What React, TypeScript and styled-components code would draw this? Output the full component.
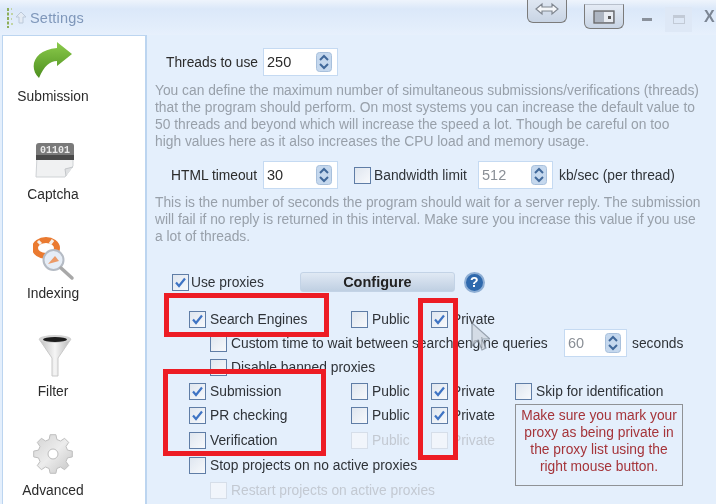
import styled, { createGlobalStyle } from 'styled-components'

const GlobalStyle = createGlobalStyle`
  html, body {
    margin: 0;
    padding: 0;
    background: #e4effc;
    overflow: hidden;
  }
`

const App = () => {
  return (
    <Window>
      <GlobalStyle />
      <TitleBar>
        <AppIcon />
        <Title>Settings</Title>
        <ToolButton $top={-6} $height={29} $left={527}>
          <svg width="24" height="14" viewBox="0 0 24 14">
            <path d="M1 7 L7 2 V5 H17 V2 L23 7 L17 12 V9 H7 V12 Z" fill="#f4f6f9" stroke="#808790" strokeWidth="1.2" />
          </svg>
        </ToolButton>
        <ToolButton $top={4} $height={25} $left={584}>
          <svg width="22" height="14" viewBox="0 0 22 14">
            <rect x="1" y="1" width="20" height="12" fill="#aeb6c2" stroke="#666" strokeWidth="1.3" />
            <rect x="11" y="2" width="9" height="10" fill="#e8ecf2" />
            <rect x="15" y="6" width="3" height="3" fill="#555" />
          </svg>
        </ToolButton>
        <WindowControls />
      </TitleBar>
      <Body>
        <Sidebar>
          <NavItem>
            <ArrowIcon />
            <NavLabel>Submission</NavLabel>
          </NavItem>
          <NavItem>
            <CaptchaIcon />
            <NavLabel>Captcha</NavLabel>
          </NavItem>
          <NavItem>
            <IndexingIcon />
            <NavLabel>Indexing</NavLabel>
          </NavItem>
          <NavItem>
            <FilterIcon />
            <NavLabel>Filter</NavLabel>
          </NavItem>
          <NavItem>
            <GearIcon />
            <NavLabel>Advanced</NavLabel>
          </NavItem>
        </Sidebar>
        <Main>
          <FieldRow>
            <FieldLabel $width={111} $indent={19}>Threads to use</FieldLabel>
            <Spin value="250" />
          </FieldRow>
          <Description $top={6}>
            You can define the maximum number of simultaneous submissions/verifications (threads)<br />
            that the program should perform. On most systems you can increase the default value to<br />
            50 threads and beyond which will increase the speed a lot. Though be careful on too<br />
            high values here as it also increases the CPU load and memory usage.
          </Description>
          <FieldRow $top={11}>
            <FieldLabel $width={111} $indent={24}>HTML timeout</FieldLabel>
            <Spin value="30" />
            <Check $left={16} />
            <BandwidthLabel>Bandwidth limit</BandwidthLabel>
            <Spin value="512" $left={9} $muted />
            <Text $left={6}>kb/sec (per thread)</Text>
          </FieldRow>
          <Description $top={5}>
            This is the number of seconds the program should wait for a server reply. The submission<br />
            will fail if no reply is returned in this interval. Make sure you increase this value if you use<br />
            a lot of threads.
          </Description>
          <ProxyHeader>
            <Check checked />
            <Text $left={2}>Use proxies</Text>
            <ConfigureButton>Configure</ConfigureButton>
            <HelpBadge>?</HelpBadge>
          </ProxyHeader>
          <OptionRow $height={24}>
            <NameCell>
              <Check checked />
              <Text $left={4}>Search Engines</Text>
            </NameCell>
            <PublicCell>
              <Check />
              <Text $left={4}>Public</Text>
            </PublicCell>
            <PrivateCell>
              <Check checked />
              <Text $left={4}>Private</Text>
            </PrivateCell>
          </OptionRow>
          <SubOptionRow $height={24}>
            <Check />
            <CustomWaitLabel>Custom time to wait between search engine queries</CustomWaitLabel>
            <Spin value="60" $width={63} $muted />
            <Text $left={5}>seconds</Text>
          </SubOptionRow>
          <SubOptionRow $height={24}>
            <Check />
            <Text $left={4}>Disable banned proxies</Text>
          </SubOptionRow>
          <OptionRow $height={24}>
            <NameCell>
              <Check checked />
              <Text $left={4}>Submission</Text>
            </NameCell>
            <PublicCell>
              <Check />
              <Text $left={4}>Public</Text>
            </PublicCell>
            <PrivateCell>
              <Check checked />
              <Text $left={4}>Private</Text>
            </PrivateCell>
            <Check />
            <Text $left={4}>Skip for identification</Text>
          </OptionRow>
          <OptionRow>
            <NameCell>
              <Check checked />
              <Text $left={4}>PR checking</Text>
            </NameCell>
            <PublicCell>
              <Check />
              <Text $left={4}>Public</Text>
            </PublicCell>
            <PrivateCell>
              <Check checked />
              <Text $left={4}>Private</Text>
            </PrivateCell>
          </OptionRow>
          <OptionRow>
            <NameCell>
              <Check />
              <Text $left={4}>Verification</Text>
            </NameCell>
            <PublicCell>
              <Check disabled />
              <Text $left={4} $disabled>Public</Text>
            </PublicCell>
            <PrivateCell>
              <Check disabled />
              <Text $left={4} $disabled>Private</Text>
            </PrivateCell>
          </OptionRow>
          <OptionRow>
            <NameCell>
              <Check />
              <Text $left={4}>Stop projects on no active proxies</Text>
            </NameCell>
          </OptionRow>
          <SubOptionRow>
            <Check disabled />
            <Text $left={4} $disabled>Restart projects on active proxies</Text>
          </SubOptionRow>

          <NoteBox>
            Make sure you mark your<br />
            proxy as being private in<br />
            the proxy list using the<br />
            right mouse button.
          </NoteBox>
          <RedBox $left={17} $top={258} $width={165} $height={44} />
          <RedBox $left={16} $top={334} $width={163} $height={87} />
          <RedBox $left={271} $top={263} $width={40} $height={162} />
          <Cursor viewBox="0 0 20 30">
            <path d="M2 1 V24 L8 18 L12 28 L16 26 L12 17 H20 Z" fill="#cfd6df" stroke="#7d8794" strokeWidth="1.2" />
          </Cursor>
        </Main>
      </Body>
    </Window>
  )
}

export default App

const Check = ({ checked, disabled, $left }: { checked?: boolean; disabled?: boolean; $left?: number }) => (
  <CheckBox $disabled={disabled} $left={$left}>
    {checked && (
      <svg width="13" height="13" viewBox="0 0 13 13">
        <path d="M2 6.5 L5 10 L11 2.5" fill="none" stroke="#3f74c4" strokeWidth="2.2" />
      </svg>
    )}
  </CheckBox>
)

const Spin = ({ value, $width, $left, $muted }: { value: string; $width?: number; $left?: number; $muted?: boolean }) => (
  <SpinBox $width={$width} $left={$left}>
    <SpinValue $muted={$muted}>{value}</SpinValue>
    <SpinArrows viewBox="0 0 16 20">
      <rect x="0.5" y="0.5" width="15" height="19" rx="3" fill="#c5d8ee" stroke="#a8c0dc" />
      <path d="M4 8 L8 4 L12 8" fill="none" stroke="#40689a" strokeWidth="2" />
      <path d="M4 12 L8 16 L12 12" fill="none" stroke="#40689a" strokeWidth="2" />
    </SpinArrows>
  </SpinBox>
)

const AppIcon = () => (
  <svg width="20" height="22" viewBox="0 0 20 22">
    <path d="M2 1 V21" stroke="#8dae58" strokeWidth="2" strokeDasharray="3 1.5" />
    <path d="M5 2 H6 M5 7 H7 M5 12 H6 M5 17 H7" stroke="#b6cb88" strokeWidth="1.4" />
    <path d="M15 5 L20 10 H17 V16 H13 V10 H10 Z" fill="#e4ebf4" stroke="#bcc9da" />
  </svg>
)

const WindowControls = () => (
  <>
    <MinimizeGlyph />
    <MaximizeBox>
      <MaximizeGlyph />
    </MaximizeBox>
    <CloseGlyph>X</CloseGlyph>
  </>
)

const ArrowIcon = () => (
  <IconSvg width="42" height="40" viewBox="0 0 42 40" $left={29} $top={5}>
    <defs>
      <linearGradient id="arrowFill" x1="0" y1="0" x2="0" y2="1">
        <stop offset="0" stopColor="#8ccb4c" />
        <stop offset="1" stopColor="#4d8f1f" />
      </linearGradient>
    </defs>
    <path d="M25 1 L40 13 L25 25 V20 C18 20 12 25 7 37 C-4 26 2 9 25 7 Z" fill="url(#arrowFill)" />
  </IconSvg>
)

const CaptchaIcon = () => (
  <IconSvg width="40" height="38" viewBox="0 0 40 38" $left={32} $top={8}>
    <path d="M2 14 H38 V24 L30 35 H1 Z" fill="#f0f1f2" stroke="#cfd2d5" />
    <path d="M31 34 L30 27 L38 25" fill="#dfe1e3" stroke="#c3c6c9" />
    <rect x="1" y="1" width="38" height="17" rx="3" fill="#7a7a7a" />
    <rect x="1" y="13" width="38" height="5" fill="#4a4a4a" />
    <text x="20" y="11" textAnchor="middle" fontFamily="Liberation Mono, monospace" fontSize="10" fontWeight="700" fill="#eaeaea">01101</text>
  </IconSvg>
)

const IndexingIcon = () => (
  <IconSvg width="44" height="44" viewBox="0 0 44 44" $left={30} $top={4}>
    <ellipse cx="13" cy="11" rx="11" ry="8" fill="none" stroke="#ea7a30" strokeWidth="6" />
    <path d="M5 4 L8 7 M20 3 L17 7" stroke="#f4f1ec" strokeWidth="3" />
    <circle cx="20.5" cy="23" r="10" fill="#e6edf6" stroke="#b5bbc4" strokeWidth="2" />
    <path d="M15 27 L22 19 L26 24 Z" fill="#eb9a68" />
    <path d="M28 31 L39 41" stroke="#a8a8a8" strokeWidth="3.5" strokeLinecap="round" />
  </IconSvg>
)

const FilterIcon = () => (
  <IconSvg width="34" height="44" viewBox="0 0 34 44" $left={35} $top={3}>
    <defs>
      <linearGradient id="funnelFill" x1="0" y1="0" x2="1" y2="0">
        <stop offset="0" stopColor="#bdbdbd" />
        <stop offset="0.5" stopColor="#f5f5f5" />
        <stop offset="1" stopColor="#b5b5b5" />
      </linearGradient>
    </defs>
    <path d="M1 5 L14 24 V42 H20 V24 L33 5 Z" fill="url(#funnelFill)" stroke="#c9c9c9" />
    <ellipse cx="17" cy="5" rx="16" ry="4" fill="#d5d5d5" />
    <ellipse cx="17" cy="5.5" rx="12" ry="2.4" fill="#1d1d1d" />
  </IconSvg>
)

// 8 teeth, each one a trapezoid between the root and the outer radius
const gearPath = (() => {
  const points: string[] = []
  for (let i = 0; i < 8; i++) {
    const a = (i * Math.PI) / 4
    const at = (r: number, d: number) =>
      `${(21 + r * Math.sin(a + d)).toFixed(1)} ${(21 - r * Math.cos(a + d)).toFixed(1)}`
    points.push(at(15, -0.26), at(19.5, -0.15), at(19.5, 0.15), at(15, 0.26))
  }
  return `M${points.join(' L')} Z`
})()

const GearIcon = () => (
  <IconSvg width="42" height="42" viewBox="0 0 42 42" $left={29} $top={3}>
    <defs>
      <linearGradient id="gearFill" x1="0" y1="0" x2="1" y2="1">
        <stop offset="0" stopColor="#d2d2d2" />
        <stop offset="0.5" stopColor="#ececec" />
        <stop offset="1" stopColor="#c4c4c4" />
      </linearGradient>
    </defs>
    <path d={gearPath} fill="url(#gearFill)" stroke="#bfbfbf" strokeLinejoin="round" />
    <circle cx="21" cy="21" r="5" fill="#ffffff" stroke="#bcbcbc" />
  </IconSvg>
)

const Window = styled.div`
  position: relative;
  width: 716px;
  height: 504px;
  overflow: hidden;
  background: #e4effc;
  font-family: 'Liberation Sans', Arial, sans-serif;
  color: #2b2b2b;
  filter: blur(0.6px);
`

const TitleBar = styled.div`
  position: relative;
  height: 35px;
  display: flex;
  align-items: center;
  padding-left: 6px;
  box-sizing: border-box;
  background: linear-gradient(180deg, #eef4fc 0, #dbe8f9 9px, #e2edfb 26px, #e7f0fc 35px);
`

const Title = styled.div`
  margin-left: 4px;
  font-size: 14.5px;
  letter-spacing: 0.2px;
  color: #7f97ba;
`

const ToolButton = styled.div<{ $top: number; $left: number; $height: number }>`
  position: absolute;
  top: ${({ $top }) => $top}px;
  left: ${({ $left }) => $left}px;
  width: 40px;
  height: ${({ $height }) => $height}px;
  display: flex;
  align-items: center;
  justify-content: center;
  box-sizing: border-box;
  border: 1px solid #7b7b7b;
  border-top-color: #b8c0cc;
  border-radius: 0 0 6px 6px;
  background: linear-gradient(180deg, #e4ebf5, #c8d4e4);
`

const MinimizeGlyph = styled.div`
  position: absolute;
  left: 642px;
  top: 18px;
  width: 10px;
  height: 3px;
  background: #8a919c;
`

const MaximizeBox = styled.div`
  position: absolute;
  left: 665px;
  top: 7px;
  width: 27px;
  height: 25px;
  display: flex;
  align-items: center;
  justify-content: center;
  background: #dee8f6;
`

const MaximizeGlyph = styled.div`
  width: 10px;
  height: 5px;
  border: 1px solid #c2cad6;
  border-top-width: 3px;
`

const CloseGlyph = styled.div`
  position: absolute;
  left: 704px;
  top: 8px;
  font-size: 16px;
  font-weight: 700;
  color: #7c8694;
`

const Body = styled.div`
  display: flex;
  height: 469px;
`

const Sidebar = styled.div`
  width: 142px;
  margin-left: 2px;
  flex-shrink: 0;
  box-sizing: content-box;
  background: #fff;
  border: 1px solid #bcd5f0;
  border-width: 1px 2px 0 1px;
`

const NavItem = styled.div`
  position: relative;
  height: 98.4px;
`

const IconSvg = styled.svg<{ $left: number; $top: number }>`
  position: absolute;
  left: ${({ $left }) => $left}px;
  top: ${({ $top }) => $top}px;
`

const NavLabel = styled.div`
  position: absolute;
  left: 0;
  width: 100px;
  top: 53px;
  text-align: center;
  font-size: 13.8px;
  color: #2b2b2b;
`

const Main = styled.div`
  position: relative;
  flex: 1;
  padding-top: 13px;
  font-size: 13.8px;
`

const FieldRow = styled.div<{ $top?: number }>`
  display: flex;
  align-items: center;
  height: 28px;
  margin-top: ${({ $top }) => $top ?? 0}px;
`

const FieldLabel = styled.div<{ $width: number; $indent: number }>`
  box-sizing: border-box;
  width: ${({ $width }) => $width}px;
  padding-left: ${({ $indent }) => $indent}px;
  white-space: nowrap;
`

const Text = styled.span<{ $left?: number; $disabled?: boolean }>`
  margin-left: ${({ $left }) => $left ?? 0}px;
  white-space: nowrap;
  color: ${({ $disabled }) => ($disabled ? '#c3c9d2' : '#2f3338')};
`

const BandwidthLabel = styled(Text)`
  width: 95px;
  margin-left: 3px;
`

const CustomWaitLabel = styled(Text)`
  width: 328px;
  margin-left: 4px;
`

const SpinBox = styled.div<{ $width?: number; $left?: number }>`
  box-sizing: border-box;
  width: ${({ $width }) => $width ?? 75}px;
  height: 28px;
  margin-left: ${({ $left }) => $left ?? 5}px;
  display: flex;
  align-items: center;
  justify-content: space-between;
  padding: 0 5px 0 3px;
  background: #fff;
  border: 1px solid #c5daf2;
  flex-shrink: 0;
`

const SpinValue = styled.span<{ $muted?: boolean }>`
  font-size: 14.5px;
  color: ${({ $muted }) => ($muted ? '#8a8f96' : '#2b2b2b')};
`

const SpinArrows = styled.svg`
  width: 16px;
  height: 20px;
`

const Description = styled.div<{ $top: number }>`
  margin: ${({ $top }) => $top}px 0 0 8px;
  font-size: 13.8px;
  line-height: 17px;
  color: #98a0aa;
  white-space: nowrap;
`

const CheckBox = styled.span<{ $disabled?: boolean; $left?: number }>`
  box-sizing: border-box;
  width: 17px;
  height: 17px;
  margin-left: ${({ $left }) => $left ?? 0}px;
  display: inline-flex;
  align-items: center;
  justify-content: center;
  flex-shrink: 0;
  border: 1.5px solid ${({ $disabled }) => ($disabled ? '#d6dee9' : '#5f7da6')};
  background: ${({ $disabled }) =>
    $disabled ? '#f1f5fb' : 'linear-gradient(135deg, #dfe6ef, #f7f9fc)'};
`

const ProxyHeader = styled.div`
  display: flex;
  align-items: center;
  height: 20px;
  margin: 27px 0 15px 25px;
`

const ConfigureButton = styled.div`
  box-sizing: border-box;
  width: 155px;
  height: 20px;
  margin-left: 36px;
  display: flex;
  align-items: center;
  justify-content: center;
  font-weight: 700;
  font-size: 14.5px;
  color: #222;
  border-radius: 3px;
  border: 1px solid #c3d3e6;
  background: linear-gradient(180deg, #e0e9f4, #bfcfe2);
`

const HelpBadge = styled.div`
  width: 21px;
  height: 21px;
  margin-left: 9px;
  display: flex;
  align-items: center;
  justify-content: center;
  border-radius: 50%;
  box-sizing: border-box;
  border: 2px solid #8eaed4;
  background: #2f69ad;
  color: #fff;
  font-weight: 700;
  font-size: 14px;
`

const OptionRow = styled.div<{ $height?: number }>`
  display: flex;
  align-items: center;
  height: ${({ $height }) => $height ?? 25}px;
  padding-left: 42px;
`

const SubOptionRow = styled(OptionRow)`
  padding-left: 63px;
`

const NameCell = styled.div`
  display: flex;
  align-items: center;
  width: 162px;
  flex-shrink: 0;
`

const PublicCell = styled.div`
  display: flex;
  align-items: center;
  width: 80px;
`

const PrivateCell = styled.div`
  display: flex;
  align-items: center;
  width: 84px;
`

const NoteBox = styled.div`
  position: absolute;
  left: 368px;
  top: 369px;
  box-sizing: border-box;
  width: 168px;
  height: 82px;
  padding: 2px 0;
  border: 1.5px solid #8f9296;
  font-size: 13.8px;
  line-height: 17px;
  text-align: center;
  color: #a5343a;
`

const RedBox = styled.div<{ $left: number; $top: number; $width: number; $height: number }>`
  position: absolute;
  left: ${({ $left }) => $left}px;
  top: ${({ $top }) => $top}px;
  width: ${({ $width }) => $width}px;
  height: ${({ $height }) => $height}px;
  box-sizing: border-box;
  border: 5.5px solid #ed1c24;
`

const Cursor = styled.svg`
  position: absolute;
  left: 323px;
  top: 287px;
  width: 20px;
  height: 30px;
  opacity: 0.75;
`
